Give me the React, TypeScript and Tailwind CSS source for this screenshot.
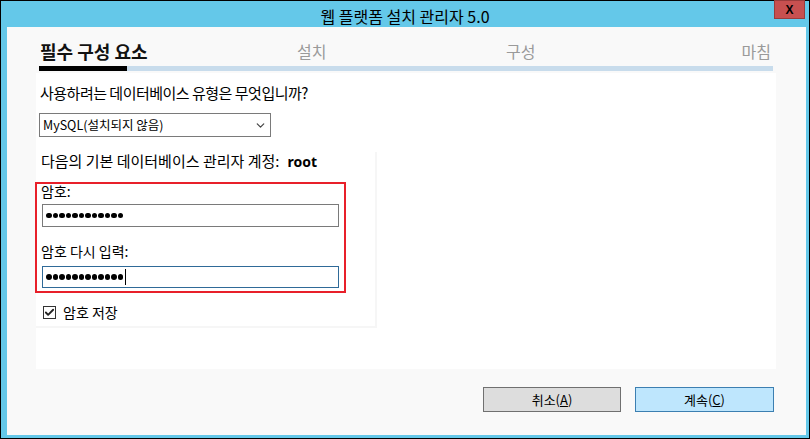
import { Check, ChevronDown } from 'lucide-react'

const font = { fontFamily: '"Noto Sans CJK KR", "Noto Sans", sans-serif' }

function Dots({ caret }: { caret?: boolean }) {
  return (
    <div className="flex h-full items-center pl-[3px]">
      {Array.from({ length: 12 }).map((_, i) => (
        <span key={i} className="mr-[1px] h-[5.5px] w-[5.5px] rounded-full bg-black" />
      ))}
      {caret && <span className="ml-[1px] h-[16px] w-px bg-black" />}
    </div>
  )
}

export default function App() {
  return (
    <div
      className="flex h-[439px] w-[810px] flex-col border border-black bg-[#64c8e9] text-black"
      style={font}
    >
      {/* title bar */}
      <div className="relative flex h-[26px] shrink-0 items-center justify-center">
        <span className="pt-[3px] text-[16px] leading-none">웹 플랫폼 설치 관리자 5.0</span>
        <div className="absolute right-[4px] top-[-1px] flex h-[19px] w-[31px] items-center justify-center border border-[#9a3c3c] bg-[#c75050]">
          <span className="text-[12px] font-bold leading-none" style={{ fontFamily: '"Liberation Sans", sans-serif' }}>
            X
          </span>
        </div>
      </div>

      {/* client area */}
      <div className="mb-[3px] ml-[6px] mr-[3px] flex flex-1 flex-col bg-[#f9f9f9]">
        {/* steps */}
        <div className="grid h-[36px] grid-cols-[257px_209px_1fr_auto] items-end pl-[33px] pr-[35px]">
          <span className="text-[18px] font-bold leading-[24px] text-[#111]">필수 구성 요소</span>
          <span className="text-[16px] leading-[24px] text-[#9a9a9a]">설치</span>
          <span className="text-[16px] leading-[24px] text-[#9a9a9a]">구성</span>
          <span className="text-[16px] leading-[24px] text-[#9a9a9a]">마침</span>
        </div>
        <div className="ml-[32px] mt-[3px] flex h-[5px] w-[734px] bg-[#c8dcec]">
          <div className="h-full w-[88px] bg-black" />
        </div>

        {/* content */}
        <div className="ml-[29px] mt-[2px] h-[296px] w-[740px] bg-white">
          <div className="pl-[4px] pt-[10px] text-[15px] leading-[20px] tracking-[-0.5px]">
            사용하려는 데이터베이스 유형은 무엇입니까?
          </div>
          <div className="ml-[3px] mt-[10px] flex h-[24px] w-[232px] items-center justify-between border border-[#7a7a7a] bg-white pl-[3px] pr-[3px]">
            <span className="text-[12.5px] leading-none">MySQL(설치되지 않음)</span>
            <ChevronDown size={13} strokeWidth={2.25} className="text-[#444]" />
          </div>

          <div className="mt-[15px] h-[176px] w-[341px] border-r-2 border-b-2 border-[#f6f6f6] bg-white">
            <div className="flex h-[19px] items-center pl-[5px] text-[15px]">
              <span>다음의 기본 데이터베이스 관리자 계정:</span>
              <span
                className="ml-[8px] text-[14px] font-bold"
                style={{ fontFamily: '"Noto Sans", sans-serif' }}
              >
                root
              </span>
            </div>

            <div className="-ml-[1px] mt-[11px] h-[111px] w-[311px] border-2 border-[#e8202a]">
              <div className="h-[14px] pl-[4px] text-[14px] leading-[14px]">암호:</div>
              <div className="ml-[5px] mt-[6px] h-[23px] w-[297px] border border-[#7a7a7a] bg-white">
                <Dots />
              </div>
              <div className="mt-[16px] h-[17px] pl-[4px] text-[14px] leading-[17px]">암호 다시 입력:</div>
              <div className="ml-[5px] mt-[6px] h-[22px] w-[297px] border border-[#2f6a98] bg-white">
                <Dots caret />
              </div>
            </div>

            <div className="ml-[7px] mt-[11px] flex h-[16px] items-center gap-[7px]">
              <div className="flex h-[13px] w-[13px] items-center justify-center border border-[#333] bg-white">
                <Check size={11} strokeWidth={4} className="text-[#222]" />
              </div>
              <span className="text-[14px] leading-none">암호 저장</span>
            </div>
          </div>
        </div>

        {/* buttons */}
        <div className="mt-[18px] flex justify-end gap-[14px] pr-[32px]">
          <button className="flex h-[25px] w-[138px] items-center justify-center border border-[#707070] bg-[#dddddd] text-[13px]">
            취소(<span className="underline">A</span>)
          </button>
          <button className="flex h-[25px] w-[139px] items-center justify-center border border-[#3c7fb1] bg-[#bee6fd] text-[13px]">
            계속(<span className="underline">C</span>)
          </button>
        </div>
      </div>
    </div>
  )
}
